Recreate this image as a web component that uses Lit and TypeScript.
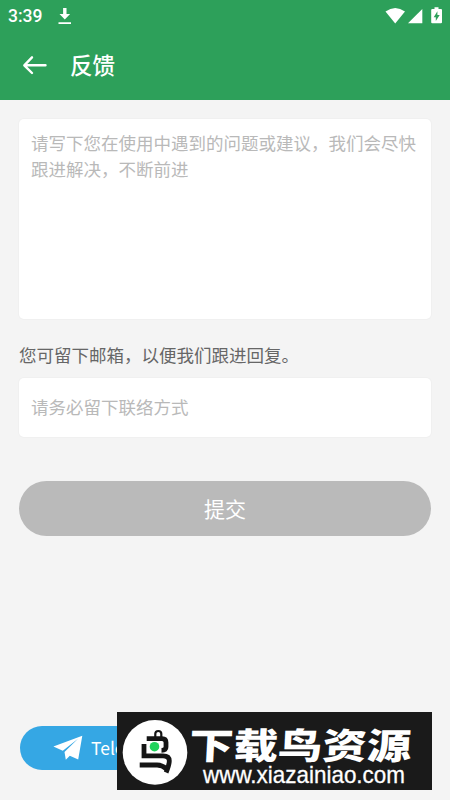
import { LitElement, html, css } from "lit";
import { customElement } from "lit/decorators.js";

@customElement("app-root")
export class AppRoot extends LitElement {
  static styles = css`
    :host {
      display: block;
      height: 800px;
      overflow: hidden;
      background: #f4f4f4;
      font-family: "Noto Sans CJK SC", sans-serif;
    }
    * { box-sizing: border-box; }
    svg { display: block; flex: none; }
    .screen { position: relative; height: 800px; display: flex; flex-direction: column; }
    .header { height: 100px; background: #2da05a; color: #fff; flex: none; }
    .status {
      height: 31px;
      display: flex;
      align-items: center;
      padding: 0 5px 0 8px;
      font: 500 17.5px/31px Roboto, sans-serif;
    }
    .time { width: 49px; padding-top: 1px; }
    .signals { margin-left: auto; }
    .bar { height: 67px; display: flex; align-items: center; padding: 0 0 0 22px; }
    .title { margin: -2px 0 0 23px; font-size: 22.5px; font-weight: 500; line-height: 30px; }
    .form { display: flex; flex-direction: column; padding: 19px 19px 0; }
    .field {
      background: #fff;
      border-radius: 5px;
      box-shadow: 0 0 1px 1px rgba(0, 0, 0, 0.018);
      color: #b9b9b9;
      font-size: 17.5px;
      line-height: 25.5px;
      padding: 11px 12px;
    }
    .message { height: 200px; white-space: nowrap; }
    .contact { height: 59px; padding-top: 16px; }
    .label { color: #666; font-size: 17.5px; line-height: 26px; margin: 23px 0 10px; }
    .submit {
      margin-top: 44px;
      height: 55px;
      border-radius: 28px;
      background: #bababa;
      color: #fff;
      text-align: center;
      font-size: 21px;
      line-height: 54px;
    }
    .telegram {
      margin: auto 0 30px 20px;
      width: 200px;
      height: 44px;
      border-radius: 22px;
      background: #35a7e4;
      color: #fff;
      display: flex;
      align-items: center;
      padding-left: 33px;
      font: 17.5px/44px "Noto Sans CJK SC", sans-serif;
    }
    .telegram span { margin-left: 8px; }
    .watermark {
      position: absolute;
      left: 117px;
      top: 712px;
    }
    .brand { font: 900 36px "Noto Sans CJK SC", sans-serif; }
    .site { font: 24px "Liberation Sans", sans-serif; }
  `;

  render() {
    return html`
      <div class="screen">
        <header class="header">
          <div class="status">
            <span class="time">3:39</span>
            <svg width="16" height="18" viewBox="0 0 16 18" fill="#fff">
              <path d="M6.1 1h3.4v6h3.6L7.8 12.4 2.5 7h3.6zM1.5 15.3H14v1.7H1.5z" />
            </svg>
            <svg class="signals" width="61" height="20" viewBox="0 0 61 20" fill="#fff">
              <path d="M1.5 5.6Q11.2-1.6 21 5.6L11.2 17.4z" />
              <path d="M38.3 3v14.3H24z" />
              <path
                fill-rule="evenodd"
                d="M50.5 1.3h4v1.6H57q1 0 1 1v12.4q0 1-1 1h-8.8q-1 0-1-1V3.9q0-1 1-1h2.3zM53.4 5.2l-3.7 6.1h2.1v3.8l3.9-6h-2.3z"
              />
            </svg>
          </div>
          <div class="bar">
            <svg width="25" height="20" viewBox="0 0 25 20" fill="none" stroke="#fff" stroke-width="2.4" stroke-linecap="round" stroke-linejoin="round">
              <path d="M10 2.3 2.3 10.3 10 18M2.8 10.3H23.5" />
            </svg>
            <span class="title">反馈</span>
          </div>
        </header>
        <main class="form">
          <div class="field message">请写下您在使用中遇到的问题或建议，我们会尽快<br />跟进解决，不断前进</div>
          <div class="label">您可留下邮箱，以便我们跟进回复。</div>
          <div class="field contact">请务必留下联络方式</div>
          <div class="submit">提交</div>
        </main>
        <div class="telegram">
          <svg width="30" height="26" viewBox="0 0 30 26" fill="#fff">
            <path d="M29.3.8 25.2 24.5 16.8 20.8 12.8 24.8 11.5 17 25 3.8 9.8 15.8.4 11.6z" />
          </svg>
          <span>Telegram</span>
        </div>
        <svg class="watermark" width="315" height="78" viewBox="0 0 315 78">
          <rect width="315" height="78" fill="#1a1a1a" />
          <circle cx="38" cy="40.4" r="32.3" fill="#fff" />
          <g fill="none" stroke="#151515" stroke-width="4.8">
            <path d="M38.3 25v-3.2q0-2.8 3-2.8t3 2.8V25" stroke-width="2.2" />
            <path d="M29.7 26.6H45q4 0 4 4V35q0 3.3-4.5 3.3" />
            <path d="M27 32v11.8H46q6.3 0 6.3 5 0 4-3.2 11.7" />
            <path d="M22.7 53H40q5 0 9.5 4" />
          </g>
          <circle cx="37.5" cy="34.7" r="4.8" fill="#20d35c" />
          <text class="brand" x="73" y="47" textLength="222" lengthAdjust="spacingAndGlyphs" fill="#fff" transform="translate(1 0) skewX(-3)">下载鸟资源</text>
          <text class="site" x="86" y="71" textLength="202" lengthAdjust="spacingAndGlyphs" fill="#fff" stroke="#fff" stroke-width=".3">www.xiazainiao.com</text>
        </svg>
      </div>
    `;
  }
}
